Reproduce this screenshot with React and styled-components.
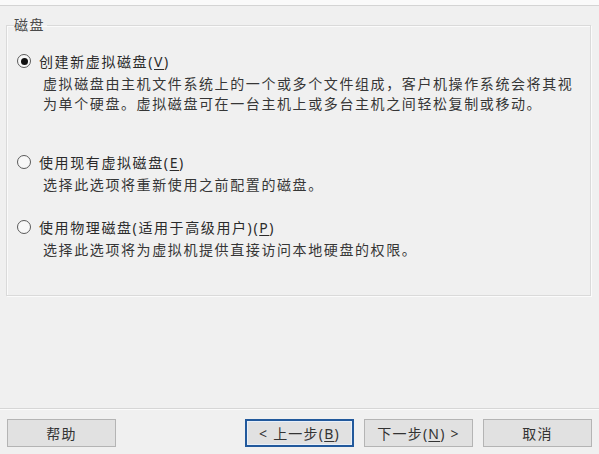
import styled, { createGlobalStyle } from "styled-components";

const GlobalStyle = createGlobalStyle`
  html, body {
    margin: 0;
    padding: 0;
    background: #f0f0f0;
  }
  * {
    box-sizing: border-box;
  }
`;

const Window = styled.div`
  width: 599px;
  height: 454px;
  display: flex;
  flex-direction: column;
  background: #f0f0f0;
  color: #2a2a2a;
  font-family: "Noto Sans", "Noto Sans CJK SC", sans-serif;
  font-size: 14px;
  letter-spacing: 1.6px;
  overflow: hidden;
`;

const TopStrip = styled.div`
  height: 6px;
  background: #fafafa;
  border-bottom: 1px solid #d4d4d4;
`;

const Group = styled.fieldset`
  margin: 9px 8px 0 6px;
  padding: 16px 7px 35px 7px;
  border: 1px solid #dadada;
  box-shadow: inset 1px 1px 0 #fbfbfb, 1px 1px 0 #fbfbfb;
  min-width: 0;
`;

const Legend = styled.legend`
  padding: 0 2px 0 0;
  line-height: 20px;
  color: #4a4a4a;
`;

const Option = styled.div`
  margin-top: ${({ $gap }) => $gap || 0}px;
`;

const OptionRow = styled.label`
  display: flex;
  align-items: center;
  height: 20px;
  gap: 8px;
`;

const Radio = styled.span`
  width: 14px;
  height: 14px;
  margin-left: 3px;
  border-radius: 50%;
  border: 1.5px solid #5a5a5a;
  background: #f8f8f8;
  display: flex;
  align-items: center;
  justify-content: center;
  flex-shrink: 0;

  &::after {
    content: "";
    width: 7px;
    height: 7px;
    border-radius: 50%;
    background: ${({ $checked }) => ($checked ? "#111" : "transparent")};
  }
`;

const Key = styled.span`
  text-decoration: underline;
  text-underline-offset: 2px;
`;

const Description = styled.p`
  margin: 3px 0 0 29px;
  line-height: 20px;
  color: #363636;
`;

const Spacer = styled.div`
  flex: 1;
`;

const Footer = styled.div`
  display: flex;
  gap: 10px;
  padding: 10px 7px 7px 7px;
  border-top: 1px solid #d6d6d6;
  box-shadow: inset 0 1px 0 #fbfbfb;
`;

const Button = styled.button`
  width: 109px;
  height: 28px;
  margin-left: ${({ $push }) => ($push ? "auto" : "0")};
  background: #e1e1e1;
  border: ${({ $focused }) =>
    $focused ? "2px solid #22599c" : "1px solid #b4b4b4"};
  box-shadow: ${({ $focused }) => ($focused ? "inset 0 0 0 1px #e8f0fa" : "none")};
  color: #333;
  font-family: inherit;
  font-size: 14px;
  letter-spacing: 1.2px;
  padding: 0;
  display: flex;
  align-items: center;
  justify-content: center;
`;

const options = [
  {
    label: "创建新虚拟磁盘",
    key: "V",
    checked: true,
    gap: 0,
    text: [
      "虚拟磁盘由主机文件系统上的一个或多个文件组成，客户机操作系统会将其视",
      "为单个硬盘。虚拟磁盘可在一台主机上或多台主机之间轻松复制或移动。",
    ],
  },
  {
    label: "使用现有虚拟磁盘",
    key: "E",
    gap: 38,
    text: ["选择此选项将重新使用之前配置的磁盘。"],
  },
  {
    label: "使用物理磁盘(适用于高级用户)",
    key: "P",
    gap: 22,
    text: ["选择此选项将为虚拟机提供直接访问本地硬盘的权限。"],
  },
];

export default function App() {
  return (
    <>
      <GlobalStyle />
      <Window>
        <TopStrip />
        <Group>
          <Legend>磁盘</Legend>
          {options.map((o) => (
            <Option key={o.key} $gap={o.gap}>
              <OptionRow>
                <Radio $checked={o.checked} />
                <span>
                  {o.label}(<Key>{o.key}</Key>)
                </span>
              </OptionRow>
              <Description>
                {o.text.map((line, i) => (
                  <span key={i}>
                    {line}
                    {i < o.text.length - 1 && <br />}
                  </span>
                ))}
              </Description>
            </Option>
          ))}
        </Group>
        <Spacer />
        <Footer>
          <Button>帮助</Button>
          <Button $push $focused>
            &lt; 上一步(<Key>B</Key>)
          </Button>
          <Button>
            下一步(<Key>N</Key>) &gt;
          </Button>
          <Button>取消</Button>
        </Footer>
      </Window>
    </>
  );
}
